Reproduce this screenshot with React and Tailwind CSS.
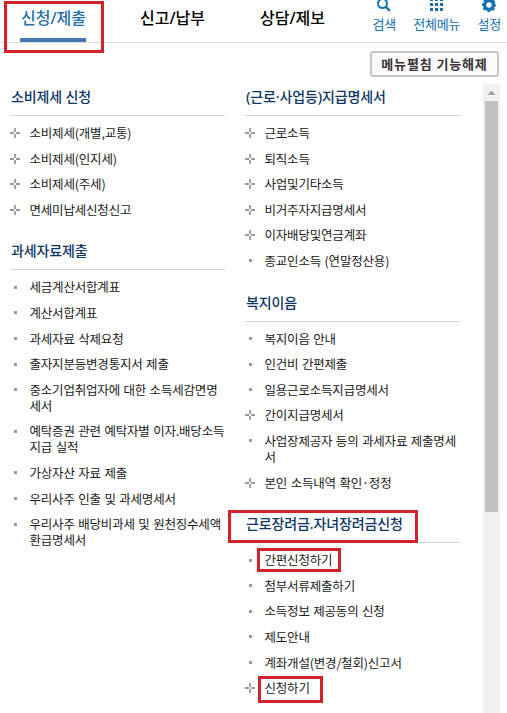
import React from "react";

const leftSections = [
  {
    title: "소비제세 신청",
    items: [
      { text: "소비제세(개별,교통)", plus: true },
      { text: "소비제세(인지세)", plus: true },
      { text: "소비제세(주세)", plus: true },
      { text: "면세미납세신청신고", plus: true },
    ],
  },
  {
    title: "과세자료제출",
    items: [
      { text: "세금계산서합계표" },
      { text: "계산서합계표" },
      { text: "과세자료 삭제요청" },
      { text: "출자지분등변경통지서 제출" },
      { text: "중소기업취업자에 대한 소득세감면명\n세서" },
      { text: "예탁증권 관련 예탁자별 이자.배당소득\n지급 실적" },
      { text: "가상자산 자료 제출" },
      { text: "우리사주 인출 및 과세명세서" },
      { text: "우리사주 배당비과세 및 원천징수세액\n환급명세서" },
    ],
  },
];

const rightSections = [
  {
    title: "(근로·사업등)지급명세서",
    items: [
      { text: "근로소득", plus: true },
      { text: "퇴직소득", plus: true },
      { text: "사업및기타소득", plus: true },
      { text: "비거주자지급명세서", plus: true },
      { text: "이자배당및연금계좌", plus: true },
      { text: "종교인소득 (연말정산용)" },
    ],
  },
  {
    title: "복지이음",
    items: [
      { text: "복지이음 안내" },
      { text: "인건비 간편제출" },
      { text: "일용근로소득지급명세서" },
      { text: "간이지급명세서", plus: true },
      { text: "사업장제공자 등의 과세자료 제출명세\n서" },
      { text: "본인 소득내역 확인·정정", plus: true },
    ],
  },
  {
    title: "근로장려금.자녀장려금신청",
    mark: "-left-[17px] -top-[2px] h-[33px] w-[190px]",
    items: [
      { text: "간편신청하기", mark: "-left-[8px] -top-[4px] h-[24px] w-[84px]" },
      { text: "첨부서류제출하기" },
      { text: "소득정보 제공동의 신청" },
      { text: "제도안내" },
      { text: "계좌개설(변경/철회)신고서" },
      { text: "신청하기", plus: true, mark: "-left-[7px] -top-[4px] h-[27px] w-[65px]" },
    ],
  },
];

function Mark({ className }) {
  return <span className={`pointer-events-none absolute border-[3px] border-[#d2232a] ${className}`} />;
}

function Bullet({ plus }) {
  if (!plus) {
    return (
      <span className="flex h-4 w-[19.5px] shrink-0 items-center pl-1">
        <span className="h-[3px] w-[3px] bg-[#999]" />
      </span>
    );
  }
  return (
    <span className="flex h-4 w-[19.5px] shrink-0 items-center">
      <svg width="10" height="10" viewBox="0 0 10 10" stroke="#999" strokeWidth="1.8">
        <path d="M5 0v4M5 6V10M0 5h4M6 5H10" />
      </svg>
    </span>
  );
}

function Section({ title, items, mark }) {
  return (
    <section>
      <h2 className="relative h-[31px] whitespace-nowrap border-b border-[#d5d5d5] pl-px text-[14px] font-medium leading-6 tracking-[-0.12px] text-[#0e3565]">
        {title}
        {mark && <Mark className={mark} />}
      </h2>
      <ul className="mt-[9px] flex flex-col gap-[9.6px] font-['Noto_Sans_CJK_KR',sans-serif]">
        {items.map((item) => (
          <li key={item.text} className="flex">
            <Bullet plus={item.plus} />
            <a className="relative whitespace-pre text-[12.5px] leading-4 tracking-[-0.19px] text-[#1a1a1a] [word-spacing:0.9px]">
              {item.text}
              {item.mark && <Mark className={item.mark} />}
            </a>
          </li>
        ))}
      </ul>
    </section>
  );
}

function Tool({ label, children }) {
  return (
    <a className="flex flex-col items-center text-[13px] leading-5 tracking-[-0.15px] text-[#1470b0]">
      <span className="flex h-[14px] items-end">{children}</span>
      {label}
    </a>
  );
}

function App() {
  return (
    <div className="flex h-[713px] w-[507px] flex-col overflow-hidden bg-white font-['Noto_Sans','Noto_Sans_CJK_KR',sans-serif]">
      <header className="flex h-[43px] shrink-0 border-b border-[#ddd]">
        <nav className="flex gap-[54px] pl-5 text-[16px] font-medium leading-9 text-black">
          <a className="relative h-[42px] w-[66px] whitespace-nowrap border-b-4 border-[#4177b5] pl-px text-[#2470ad]">
            신청/제출
            <Mark className="-left-4 top-px h-[52px] w-[100px]" />
          </a>
          <a className="w-[66px] whitespace-nowrap">신고/납부</a>
          <a className="w-[66px] whitespace-nowrap">상담/제보</a>
        </nav>
        <div className="ml-auto flex gap-[17px] pr-[6px]">
          <Tool label="검색">
            <svg className="mb-[2px]" width="14" height="14" viewBox="0 0 14 14" fill="none" stroke="#1470b0" strokeWidth="2">
              <circle cx="5.5" cy="5.5" r="4.5" />
              <path d="M8.6 8.6L13 13" strokeWidth="2.4" />
            </svg>
          </Tool>
          <Tool label="전체메뉴">
            <svg className="mb-[3px]" width="13" height="13" viewBox="0 0 13 13" fill="#1470b0">
              <path d="M0 0h3v3H0zM5 0h3v3H5zM10 0h3v3h-3zM0 5h3v3H0zM5 5h3v3H5zM10 5h3v3h-3zM0 10h3v3H0zM5 10h3v3H5zM10 10h3v3h-3z" />
            </svg>
          </Tool>
          <Tool label="설정">
            <svg className="mb-[2px]" width="14" height="14" viewBox="0 0 14 14" fill="none" stroke="#1470b0">
              <circle cx="7" cy="7" r="4.4" strokeWidth="3.4" />
              <circle cx="7" cy="7" r="6.3" strokeWidth="1.4" strokeDasharray="2.97 1.98" strokeDashoffset="1.5" />
            </svg>
          </Tool>
        </div>
      </header>

      <div className="flex shrink-0 justify-end pr-2 pt-2">
        <button className="h-[26px] w-[129px] whitespace-nowrap rounded-[3px] border-2 border-[#c6c6c6] bg-[#fafafa] text-[13px] font-bold leading-[22px] tracking-[0.8px] text-[#3a3338]">
          메뉴펼침 기능해제
        </button>
      </div>

      <div className="mt-[7px] flex min-h-0 flex-1 pl-[10px]">
        <div className="flex gap-5 pt-px">
          <div className="flex w-[215px] flex-col gap-[21.6px]">
            {leftSections.map((section) => (
              <Section key={section.title} {...section} />
            ))}
          </div>
          <div className="flex w-[215px] flex-col gap-[21.6px]">
            {rightSections.map((section) => (
              <Section key={section.title} {...section} />
            ))}
          </div>
        </div>
        <div className="ml-auto mr-[7px] flex w-[17px] flex-col items-center bg-[#f1f1f1]">
          <svg className="shrink-0" width="17" height="17" viewBox="0 0 17 17" fill="#a3a3a3">
            <path d="M4.5 11l4-4.5 4 4.5z" />
          </svg>
          <div className="h-[411px] w-[13px] bg-[#c1c1c1]" />
        </div>
      </div>
    </div>
  );
}

export default App;
